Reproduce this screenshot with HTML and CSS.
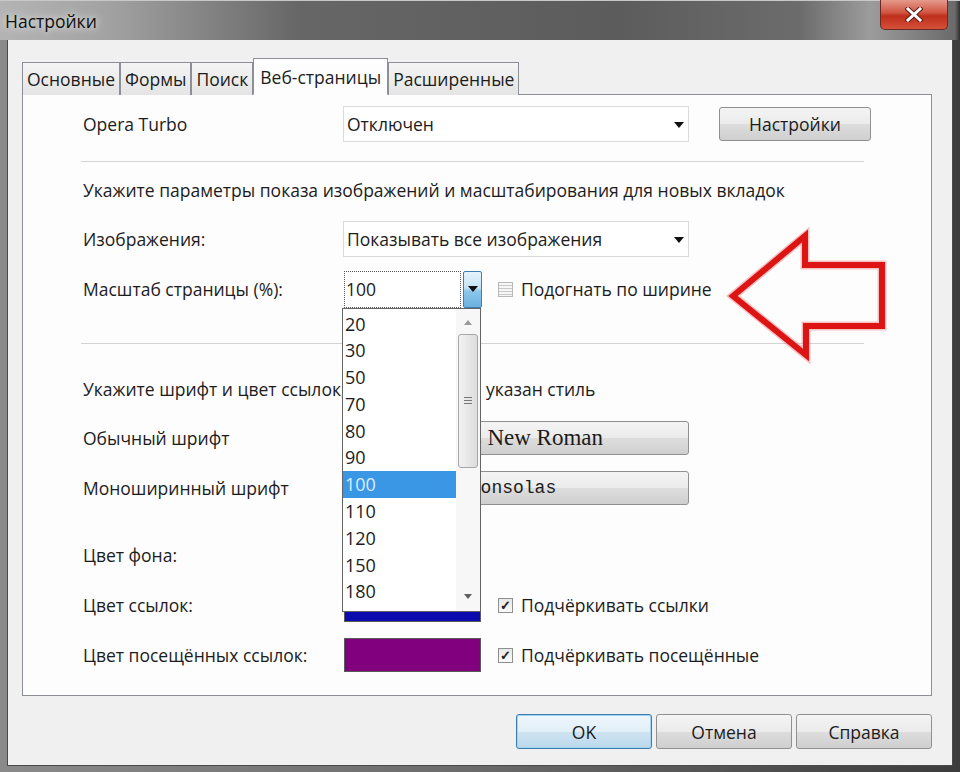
FILE: index.html
```html
<!DOCTYPE html>
<html lang="ru">
<head>
    <meta charset="UTF-8">
    <title>Настройки</title>
    <link rel="stylesheet" href="styles.css">
</head>
<body>

<div class="window">
    <div class="titlebar">
        <span class="title">Настройки</span>
        <div class="close">
            <svg width="18" height="15" viewBox="0 0 18 15"><path d="M3 2 L15 13 M15 2 L3 13" stroke="#5a2018" stroke-width="5" stroke-linecap="square"/><path d="M3 2 L15 13 M15 2 L3 13" stroke="#fff" stroke-width="3" stroke-linecap="square"/></svg>
        </div>
    </div>

    <div class="dialog">
        <div class="tabs">
            <div class="tab">Основные</div>
            <div class="tab">Формы</div>
            <div class="tab">Поиск</div>
            <div class="tab active">Веб-страницы</div>
            <div class="tab">Расширенные</div>
        </div>

        <div class="panel">
            <div class="row">
                <span class="label">Opera Turbo</span>
                <div class="select">Отключен<svg class="caret" width="10" height="6" viewBox="0 0 10 6"><path d="M0 0 H10 L5 6 Z" fill="#111"/></svg></div>
                <div class="btn btn-side">Настройки</div>
            </div>

            <div class="sep"></div>

            <div class="note">Укажите параметры показа изображений и масштабирования для новых вкладок</div>

            <div class="row">
                <span class="label">Изображения:</span>
                <div class="select">Показывать все изображения<svg class="caret" width="10" height="6" viewBox="0 0 10 6"><path d="M0 0 H10 L5 6 Z" fill="#111"/></svg></div>
            </div>

            <div class="row">
                <span class="label">Масштаб страницы (%):</span>
                <div class="combo">
                    <div class="combo-input">100</div>
                    <div class="combo-btn"><svg width="10" height="6" viewBox="0 0 10 6"><path d="M0 0 H10 L5 6 Z" fill="#111"/></svg></div>

                    <div class="droplist">
                        <div class="items">
                            <div class="item">20</div>
                            <div class="item">30</div>
                            <div class="item">50</div>
                            <div class="item">70</div>
                            <div class="item">80</div>
                            <div class="item">90</div>
                            <div class="item selected">100</div>
                            <div class="item">110</div>
                            <div class="item">120</div>
                            <div class="item">150</div>
                            <div class="item">180</div>
                        </div>
                        <div class="scrollbar">
                            <svg class="sb-arrow" width="8" height="5" viewBox="0 0 8 5"><path d="M0 5 L4 0 L8 5 Z" fill="#9a9a9a"/></svg>
                            <div class="thumb"><span></span><span></span><span></span></div>
                            <svg class="sb-arrow down" width="8" height="5" viewBox="0 0 8 5"><path d="M0 0 H8 L4 5 Z" fill="#606060"/></svg>
                        </div>
                    </div>
                </div>
                <div class="check fit-check"><span class="box lines"></span>Подогнать по ширине</div>
            </div>

            <div class="sep second"></div>

            <div class="note">Укажите шрифт и цвет ссылок, для которых не указан стиль</div>

            <div class="row">
                <span class="label">Обычный шрифт</span>
                <div class="btn font-btn serif">Times New Roman</div>
            </div>

            <div class="row">
                <span class="label">Моноширинный шрифт</span>
                <div class="btn font-btn mono">Consolas</div>
            </div>

            <div class="row gap-top">
                <span class="label">Цвет фона:</span>
            </div>

            <div class="row">
                <span class="label">Цвет ссылок:</span>
                <div class="swatch link"></div>
                <div class="check"><span class="box checked">&#10003;</span>Подчёркивать ссылки</div>
            </div>

            <div class="row">
                <span class="label">Цвет посещённых ссылок:</span>
                <div class="swatch visited"></div>
                <div class="check"><span class="box checked">&#10003;</span>Подчёркивать посещённые</div>
            </div>
        </div>

        <div class="actions">
            <div class="btn btn-main default">OK</div>
            <div class="btn btn-main">Отмена</div>
            <div class="btn btn-main">Справка</div>
        </div>
    </div>

    <!-- red pointer drawn over the dialog -->
    <svg class="pointer" width="960" height="772" viewBox="0 0 960 772">
        <polygon points="733,296 805,236 805,265 882,265 882,326 806,326 806,355" fill="none" stroke="rgba(235,80,80,0.35)" stroke-width="9" stroke-linejoin="miter"/>
        <polygon points="733,296 805,236 805,265 882,265 882,326 806,326 806,355" fill="none" stroke="#dc1414" stroke-width="6" stroke-linejoin="miter"/>
    </svg>
</div>

</body>
</html>
```

FILE: styles.css
```css
/* Global */
body {
    margin: 0;
    font-family: 'Open Sans', 'Noto Sans', sans-serif;
    font-size: 17.5px;
    color: #1c1c1c;
}

/* Window frame */
.window {
    position: relative;
    width: 960px;
    height: 772px;
    display: flex;
    flex-direction: column;
    background: linear-gradient(to right, #8a8a8a, #6a6a6a 50%, #3c3c3c);
    overflow: hidden;
}

.titlebar {
    height: 40px;
    flex-shrink: 0;
    display: flex;
    align-items: flex-start;
    background: linear-gradient(to right, #b4b4b4 0, #a2a2a2 110px, #666 300px, #5c5c5c 620px, #6c6c6c 800px, #9c9c9c 870px, #6a6a6a 955px, #2e2e2e 960px);
    border-top: 1px solid #c8c8c8;
    box-sizing: border-box;
}

.title {
    padding: 8px 0 0 5px;
    line-height: 24px;
    color: #101010;
    text-shadow: 0 0 10px #ddd, 0 0 6px #ddd;
}

.close {
    margin-left: auto;
    margin-right: 12px;
    margin-top: -1px;
    width: 68px;
    height: 30px;
    box-sizing: border-box;
    border: 1px solid #6b2a20;
    border-top: none;
    border-radius: 0 0 5px 5px;
    background: linear-gradient(#e59a8c, #d0523e 45%, #bf2f1a 55%, #d5503a);
    display: flex;
    align-items: center;
    justify-content: center;
}

/* Dialog body */
.dialog {
    flex: 1;
    margin: 0 7px 6px 7px;
    padding: 18px 20px 0 14px;
    border: 1px solid #4a4a4a;
    border-top: none;
    background: #f0f0f0;
    display: flex;
    flex-direction: column;
}

/* Tabs */
.tabs {
    display: flex;
    align-items: flex-end;
    height: 37px;
    margin-bottom: -1px;
    position: relative;
    z-index: 1;
}

.tab {
    height: 33px;
    padding: 0 4px;
    box-sizing: border-box;
    border: 1px solid #8d8f96;
    border-bottom: none;
    background: linear-gradient(#f4f4f4, #e4e4e4);
    display: flex;
    align-items: center;
}

.tab.active {
    height: 37px;
    padding: 0 6px;
    background: #fdfdfd;
    border-bottom: 1px solid #fdfdfd;
}

/* Tab page */
.panel {
    height: 602px;
    box-sizing: border-box;
    border: 1px solid #8d8f96;
    background: #fdfdfd;
    padding: 4px 67px 14px 60px;
}

.row {
    height: 50px;
    display: flex;
    align-items: center;
}

.row > * {
    flex-shrink: 0;
}

.row.gap-top {
    margin-top: 17px;
}

.label {
    width: 260px;
}

.note {
    height: 49px;
    display: flex;
    align-items: center;
    white-space: nowrap;
}

.sep {
    height: 1px;
    background: #d3d3d3;
    margin: 12px 0 3px -2px;
}

.sep.second {
    margin: 29px 0 20px -2px;
}

/* Controls */
.select {
    position: relative;
    width: 346px;
    height: 36px;
    box-sizing: border-box;
    padding-left: 3px;
    border: 1px solid #dadada;
    background: #fff;
    display: flex;
    align-items: center;
}

.caret {
    position: absolute;
    right: 4px;
    top: 15px;
}

.btn {
    box-sizing: border-box;
    border: 1px solid #8f9092;
    border-radius: 3px;
    background: linear-gradient(#f4f4f4, #ebebeb 50%, #dddddd 51%, #cfcfcf);
    display: flex;
    align-items: center;
    justify-content: center;
}

.btn-side {
    width: 152px;
    height: 34px;
    margin-left: 30px;
}

.font-btn {
    width: 344px;
    height: 34px;
    margin-left: 2px;
}

.serif {
    font-family: 'Liberation Serif', serif;
    font-size: 23px;
    padding-right: 6px;
}

.mono {
    font-family: 'Liberation Mono', monospace;
    font-size: 18px;
    padding-right: 8px;
}

/* Zoom combo with open list */
.combo {
    position: relative;
    display: flex;
    gap: 2px;
    height: 37px;
    margin-left: 1px;
}

.combo-input {
    width: 117px;
    box-sizing: border-box;
    border: 1px dotted #555;
    background: #fff;
    padding-left: 1px;
    display: flex;
    align-items: center;
}

.combo-btn {
    width: 19px;
    box-sizing: border-box;
    border: 1px solid #3c7fb1;
    border-radius: 2px;
    background: linear-gradient(#e6f3fb, #c4e3f7 45%, #8cc6ec 55%, #6cb1df);
    display: flex;
    align-items: center;
    justify-content: center;
}

.droplist {
    position: absolute;
    top: 37px;
    left: -2px;
    width: 139px;
    height: 304px;
    box-sizing: border-box;
    border: 1px solid #646464;
    background: #fff;
    display: flex;
    z-index: 5;
    font-size: 18px;
}

.items {
    flex: 1;
    padding-top: 2px;
}

.item {
    height: 26.8px;
    line-height: 26.8px;
    padding-left: 2px;
}

.item.selected {
    background: #3a97e6;
    color: #d9ecff;
}

.scrollbar {
    width: 24px;
    background: #f7f7f7;
    display: flex;
    flex-direction: column;
    align-items: center;
    padding-top: 11px;
    box-sizing: border-box;
}

.thumb {
    width: 20px;
    height: 134px;
    margin-top: 9px;
    box-sizing: border-box;
    border: 1px solid #a8a8a8;
    border-radius: 3px;
    background: linear-gradient(to right, #f2f2f2, #dcdcdc);
    display: flex;
    flex-direction: column;
    align-items: center;
    justify-content: center;
    gap: 2px;
}

.thumb span {
    width: 8px;
    height: 1px;
    background: #777;
}

.sb-arrow.down {
    margin-top: auto;
    margin-bottom: 12px;
}

/* Checkboxes */
.check {
    display: flex;
    align-items: center;
    gap: 8px;
    margin-left: 17px;
}

.fit-check {
    margin-left: 16px;
}

.box {
    width: 15px;
    height: 15px;
    box-sizing: border-box;
    border: 1px solid #8e8f8f;
    background: #f4f4f4;
    display: flex;
    align-items: center;
    justify-content: center;
    font-size: 13px;
    line-height: 1;
    color: #222;
}

.box.lines {
    border-color: #b8b8b8;
    background: repeating-linear-gradient(#f6f6f6 0, #f6f6f6 2px, #c8c8c8 2px, #c8c8c8 3px);
}

.box.checked {
    background: linear-gradient(#e8e8e8, #fafafa);
    font-weight: bold;
}

/* Colour swatches */
.swatch {
    width: 137px;
    height: 34px;
    margin-left: 1px;
    box-sizing: border-box;
    border: 1px solid #5a5a5a;
}

.swatch.link {
    background: #0c0cae;
}

.swatch.visited {
    background: #80007e;
}

/* Dialog buttons */
.actions {
    display: flex;
    justify-content: flex-end;
    gap: 4px;
    margin-top: 18px;
}

.btn-main {
    width: 136px;
    height: 35px;
}

.btn-main.default {
    border-color: #3d7bad;
    box-shadow: inset 0 0 0 1px #9fd5f5;
    background: linear-gradient(#eef6fb, #e2eff8 50%, #cfe4f2 51%, #bcd8ec);
}

/* Annotation arrow */
.pointer {
    position: absolute;
    top: 0;
    left: 0;
    pointer-events: none;
}
```
